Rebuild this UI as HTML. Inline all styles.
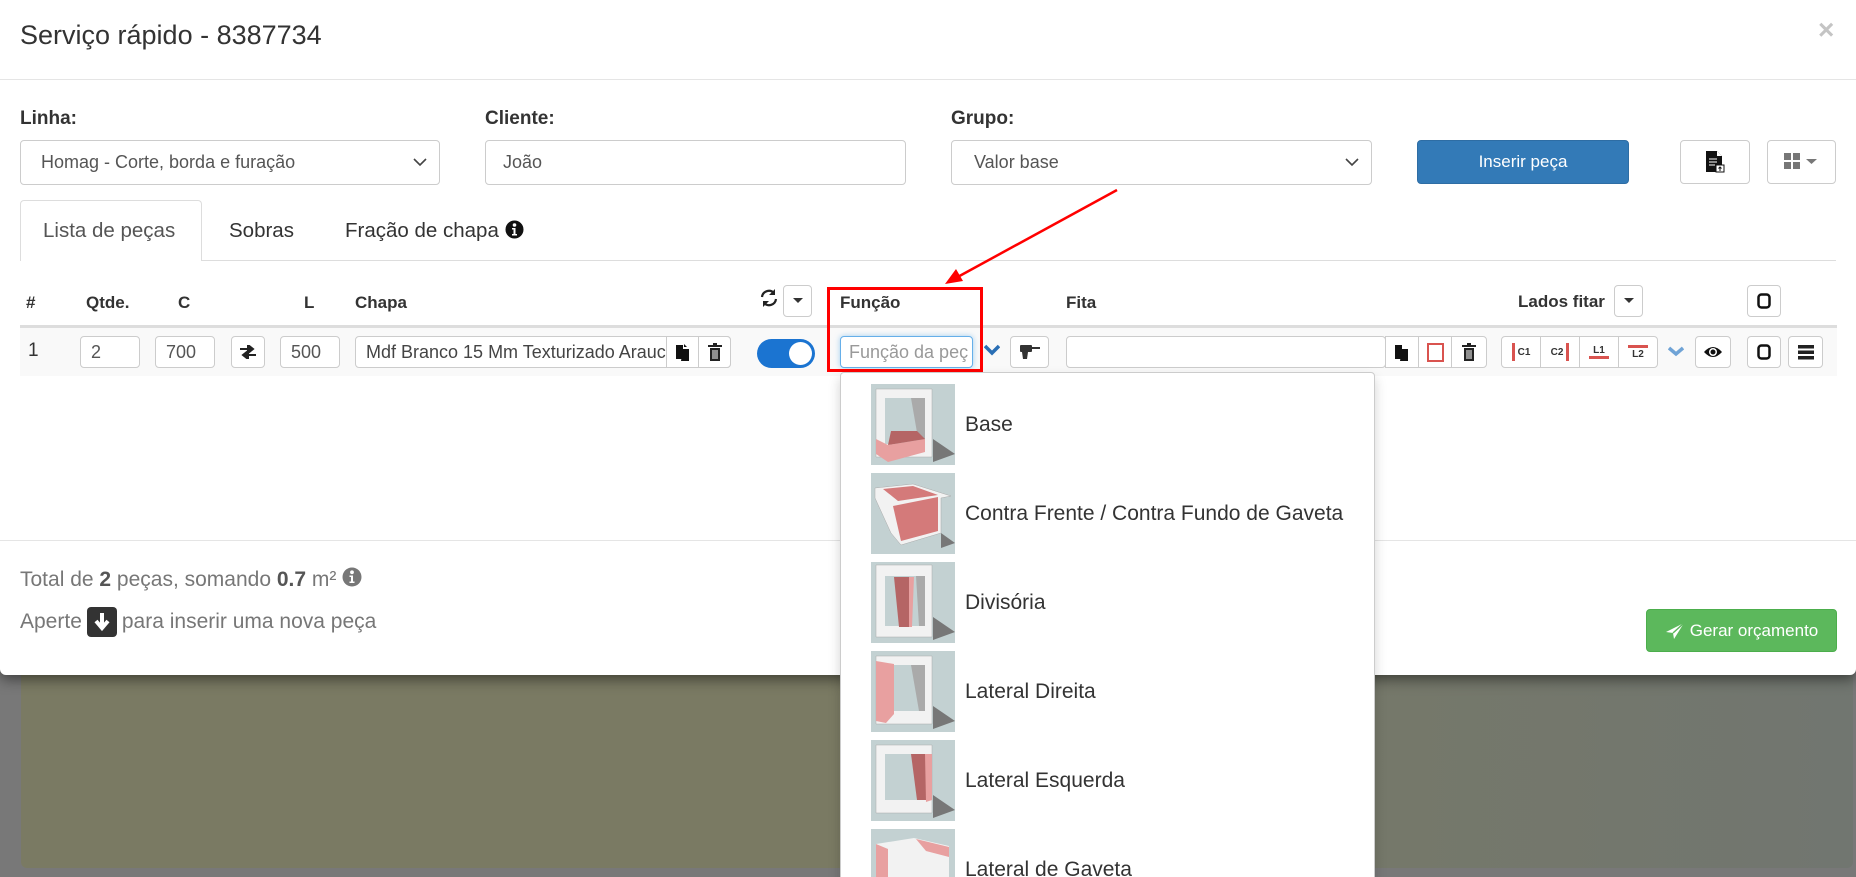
<!DOCTYPE html>
<html style="width:1856px;height:877px;overflow:hidden"><head><meta charset="utf-8">
<style>
*{box-sizing:border-box;margin:0;padding:0}
body{width:1856px;height:877px;overflow:hidden;background:#787878;font-family:"Liberation Sans",Arial,sans-serif;color:#333;position:relative}
.a{position:absolute}
.panel{left:21px;top:660px;width:1832px;height:208px;background:linear-gradient(90deg,#7a7a63 0%,#7a7a63 45%,#717670 100%);border-radius:0 0 6px 6px}
.modal{left:0;top:0;width:1856px;height:675px;background:#fff;border-radius:0 0 6px 6px;box-shadow:0 4px 14px rgba(0,0,0,.5)}
.inp{position:absolute;border:1px solid #ccc;border-radius:4px;background:#fff;font-size:18px;color:#555;padding-left:10px;display:flex;align-items:center;white-space:nowrap;overflow:hidden}
.btn{position:absolute;border:1px solid #ccc;border-radius:4px;background:#fff;display:flex;align-items:center;justify-content:center}
.lbl{position:absolute;font-weight:bold;font-size:19px;color:#333}
.th{position:absolute;font-weight:bold;font-size:17px;top:293px;color:#333}
.item{position:absolute;left:30px;height:81px;display:flex;align-items:center}
.item span{font-size:21px;color:#333;margin-left:10px}
.sm{font-size:10px;font-weight:bold;color:#333}
</style></head><body>
<div class="a panel"></div>
<div class="a modal">
  <div class="a" style="left:20px;top:20px;font-size:27px;color:#333">Serviço rápido - 8387734</div>
  <div class="a" style="left:1818px;top:14px;font-size:28px;font-weight:bold;color:#c4c4c4">×</div>
  <div class="a" style="left:0;top:79px;width:1856px;height:1px;background:#e5e5e5"></div>

  <div class="lbl" style="left:20px;top:108px">Linha:</div>
  <div class="lbl" style="left:485px;top:108px">Cliente:</div>
  <div class="lbl" style="left:951px;top:108px">Grupo:</div>
  <div class="inp" style="left:20px;top:140px;width:420px;height:45px;padding-left:20px">Homag - Corte, borda e furação
    <svg class="a" style="right:12px;top:17px" width="14" height="9"><path d="M1 1l6 6 6-6" stroke="#444" stroke-width="1.6" fill="none"/></svg></div>
  <div class="inp" style="left:485px;top:140px;width:421px;height:45px;padding-left:17px">João</div>
  <div class="inp" style="left:951px;top:140px;width:421px;height:45px;padding-left:22px">Valor base
    <svg class="a" style="right:12px;top:17px" width="14" height="9"><path d="M1 1l6 6 6-6" stroke="#444" stroke-width="1.6" fill="none"/></svg></div>
  <div class="btn" style="left:1417px;top:140px;width:212px;height:44px;background:#337ab7;border-color:#2e6da4;color:#fff;font-size:17px">Inserir peça</div>
  <div class="btn" style="left:1680px;top:140px;width:70px;height:44px">
    <svg width="22" height="24"><path d="M2 1h11l5 5v16H2z" fill="#111"/><path d="M13 1v5h5" fill="#fff"/><path d="M5 9h8M5 12h8M5 15h6" stroke="#fff" stroke-width="1"/><rect x="12" y="15" width="8" height="7" fill="#fff" stroke="#111"/><path d="M16 21v-4M14.5 18.5l1.5-1.5 1.5 1.5" stroke="#111" fill="none"/></svg></div>
  <div class="btn" style="left:1767px;top:140px;width:69px;height:44px">
    <svg width="36" height="18"><rect x="0" y="0" width="7" height="7" fill="#777"/><rect x="9" y="0" width="7" height="7" fill="#777"/><rect x="0" y="9" width="7" height="7" fill="#777"/><rect x="9" y="9" width="7" height="7" fill="#777"/><path d="M22 6h11l-5.5 5z" fill="#777"/></svg></div>

  <div class="a" style="left:20px;top:200px;width:182px;height:61px;border:1px solid #ddd;border-bottom:none;border-radius:4px 4px 0 0;background:#fff;z-index:2"></div>
  <div class="a" style="left:20px;top:260px;width:1816px;height:1px;background:#ddd"></div>
  <div class="a" style="left:43px;top:219px;font-size:20.5px;color:#555;z-index:3">Lista de peças</div>
  <div class="a" style="left:229px;top:219px;font-size:20.5px;color:#333">Sobras</div>
  <div class="a" style="left:345px;top:219px;font-size:20.5px;color:#333">Fração de chapa <svg width="19" height="19" style="vertical-align:-2px"><circle cx="9.5" cy="9.5" r="9" fill="#111"/><circle cx="9.5" cy="5" r="1.8" fill="#fff"/><path d="M7 8h3.5v6H12v1.5H7V14h1.5v-4.5H7z" fill="#fff"/></svg></div>

  <div class="th" style="left:26px">#</div>
  <div class="th" style="left:86px">Qtde.</div>
  <div class="th" style="left:178px">C</div>
  <div class="th" style="left:304px">L</div>
  <div class="th" style="left:355px">Chapa</div>
  <svg class="a" style="left:759px;top:288px" width="20" height="20"><path d="M3 9a7 7 0 0 1 12-4M17 11a7 7 0 0 1-12 4" stroke="#222" stroke-width="2.2" fill="none"/><path d="M16 1v6h-6zM4 19v-6h6z" fill="#222"/></svg>
  <div class="btn" style="left:783px;top:285px;width:29px;height:32px"><svg width="10" height="6"><path d="M0 0h10L5 5z" fill="#333"/></svg></div>
  <div class="th" style="left:840px">Função</div>
  <div class="th" style="left:1066px">Fita</div>
  <div class="th" style="left:1518px;font-size:17px;top:292px">Lados fitar</div>
  <div class="btn" style="left:1614px;top:285px;width:29px;height:32px"><svg width="10" height="6"><path d="M0 0h10L5 5z" fill="#333"/></svg></div>
  <div class="btn" style="left:1747px;top:285px;width:34px;height:32px"><svg width="14" height="16"><rect x="1.5" y="1.5" width="11" height="13" rx="3" stroke="#111" stroke-width="2.5" fill="none"/></svg></div>

  <div class="a" style="left:20px;top:325px;width:1817px;height:3px;background:#ddd"></div>
  <div class="a" style="left:20px;top:328px;width:1817px;height:48px;background:#f9f9f9"></div>
  <div class="a" style="left:28px;top:340px;font-size:19px;color:#333">1</div>
  <div class="inp" style="left:80px;top:336px;width:60px;height:32px">2</div>
  <div class="inp" style="left:155px;top:336px;width:60px;height:32px">700</div>
  <div class="btn" style="left:231px;top:336px;width:34px;height:32px"><svg width="18" height="14"><path d="M1 4h12M9 0l5 4-5 4z M17 10H5M9 6l-5 4 5 4z" stroke="#222" stroke-width="2" fill="#222"/></svg></div>
  <div class="inp" style="left:280px;top:336px;width:60px;height:32px">500</div>
  <div class="inp" style="left:355px;top:336px;width:376px;height:32px;color:#444">Mdf Branco 15 Mm Texturizado Arauc</div>
  <div class="btn" style="left:666px;top:336px;width:33px;height:32px;border-radius:0"><svg width="16" height="18"><path d="M1 2h7v14H1z M8 6h6v12H6z" fill="#111"/><path d="M9 1l3 3h-3z" fill="#111"/></svg></div>
  <div class="btn" style="left:698px;top:336px;width:33px;height:32px;border-radius:0 4px 4px 0"><svg width="14" height="18"><path d="M0 3h14M5 1h4" stroke="#222" stroke-width="2"/><rect x="2" y="5" width="10" height="13" fill="#222"/><path d="M5 7v9M7 7v9M9 7v9" stroke="#fff"/></svg></div>
  <div class="a" style="left:757px;top:339px;width:58px;height:29px;border-radius:15px;background:#1b74d1"><div class="a" style="right:3px;top:3px;width:23px;height:23px;border-radius:50%;background:#fff"></div></div>
  <div class="inp" style="left:840px;top:336px;width:133px;height:32px;border-color:#66afe9;box-shadow:0 0 6px rgba(102,175,233,.6);color:#999;font-size:18px;padding-left:8px">Função da peç</div>
  <svg class="a" style="left:984px;top:344px" width="16" height="12"><path d="M1 2l7 7 7-7" stroke="#2a6fb5" stroke-width="3.5" fill="none"/></svg>
  <div class="btn" style="left:1010px;top:336px;width:39px;height:32px"><svg width="22" height="16"><rect x="1" y="1" width="12" height="7" rx="1" fill="#333"/><path d="M3 8h6l-1 7H4z" fill="#333"/><path d="M13 4h8" stroke="#333" stroke-width="2"/></svg></div>
  <div class="a" style="left:827px;top:287px;width:156px;height:85px;border:3px solid #f00"></div>
  <svg class="a" style="left:940px;top:185px" width="185" height="105"><path d="M177 5L14 94" stroke="#f00" stroke-width="2.5"/><path d="M5 99l18-3-7-12z" fill="#f00"/></svg>

  <div class="inp" style="left:1066px;top:336px;width:320px;height:32px"></div>
  <div class="btn" style="left:1385px;top:336px;width:34px;height:32px;border-radius:0"><svg width="16" height="18"><path d="M1 2h7v14H1z M8 6h6v12H6z" fill="#111"/></svg></div>
  <div class="btn" style="left:1418px;top:336px;width:34px;height:32px;border-radius:0"><div style="width:17px;height:19px;border:2.5px solid #d9534f"></div></div>
  <div class="btn" style="left:1451px;top:336px;width:36px;height:32px;border-radius:0 4px 4px 0"><svg width="14" height="18"><path d="M0 3h14M5 1h4" stroke="#222" stroke-width="2"/><rect x="2" y="5" width="10" height="13" fill="#222"/><path d="M5 7v9M7 7v9M9 7v9" stroke="#fff"/></svg></div>

  <div class="btn" style="left:1501px;top:336px;width:40px;height:32px;border-radius:4px 0 0 4px"><span style="display:inline-block;width:3px;height:18px;background:#d9534f;margin-right:3px"></span><span class="sm">C1</span></div>
  <div class="btn" style="left:1540px;top:336px;width:40px;height:32px;border-radius:0"><span class="sm">C2</span><span style="display:inline-block;width:3px;height:18px;background:#d9534f;margin-left:3px"></span></div>
  <div class="btn" style="left:1579px;top:336px;width:40px;height:32px;border-radius:0"><span class="sm" style="border-bottom:3px solid #d9534f;padding:0 4px">L1</span></div>
  <div class="btn" style="left:1618px;top:336px;width:40px;height:32px;border-radius:0 4px 4px 0"><span class="sm" style="border-top:3px solid #d9534f;padding:1px 4px 0">L2</span></div>
  <svg class="a" style="left:1668px;top:346px" width="16" height="11"><path d="M1 2l7 6 7-6" stroke="#6fa3d6" stroke-width="3.5" fill="none"/></svg>
  <div class="btn" style="left:1695px;top:336px;width:36px;height:32px"><svg width="20" height="14"><path d="M1 7Q10-3 19 7Q10 17 1 7z" fill="#111"/><circle cx="10" cy="7" r="4" fill="#fff"/><circle cx="10" cy="7" r="2.5" fill="#111"/></svg></div>
  <div class="btn" style="left:1747px;top:336px;width:34px;height:32px"><svg width="14" height="16"><rect x="1.5" y="1.5" width="11" height="13" rx="3" stroke="#111" stroke-width="2.5" fill="none"/></svg></div>
  <div class="btn" style="left:1788px;top:336px;width:35px;height:32px"><svg width="16" height="15"><rect y="0" width="16" height="3.5" fill="#222"/><rect y="5.5" width="16" height="3.5" fill="#222"/><rect y="11" width="16" height="3.5" fill="#222"/></svg></div>

  <div class="a" style="left:0;top:540px;width:1856px;height:1px;background:#e5e5e5"></div>
  <div class="a" style="left:20px;top:567px;font-size:21px;color:#777">Total de <b style="color:#555">2</b> peças, somando <b style="color:#555">0.7</b> m² <svg width="20" height="20" style="vertical-align:-1px"><circle cx="10" cy="10" r="9.5" fill="#777"/><circle cx="10" cy="5.3" r="1.9" fill="#fff"/><path d="M7.5 8.5h3.5v6h1.5v1.5h-5V14.5h1.5v-4.5H7.5z" fill="#fff"/></svg></div>
  <div class="a" style="left:20px;top:607px;font-size:21px;color:#777;display:flex;align-items:center">Aperte <span style="display:inline-flex;width:30px;height:30px;background:#333;border-radius:4px;margin:0 5px;align-items:center;justify-content:center"><svg width="16" height="20"><path d="M8 1v12M2 9l6 7 6-7" stroke="#fff" stroke-width="4" fill="none"/></svg></span> para inserir uma nova peça</div>
  <div class="btn" style="left:1646px;top:609px;width:191px;height:43px;background:#5cb85c;border-color:#4cae4c;color:#fff;font-size:17px"><svg width="20" height="18" style="margin-right:5px"><path d="M19 1L1 10l7 1 1 6z" fill="#fff"/><path d="M19 1L8 11" stroke="#5cb85c" stroke-width="1.5"/></svg>Gerar orçamento</div>
</div>

<div class="a" style="left:840px;top:372px;width:535px;height:540px;background:#fff;border:1px solid #ccc;border-radius:4px;box-shadow:0 6px 12px rgba(0,0,0,.18)">
  <div class="item" style="top:11px"><svg width="84" height="81"><rect width="84" height="81" fill="#c3d1d2"/><path d="M62 55L84 70 62 78z" fill="#777"/><path d="M5 5h56v68H5z" fill="#f2f2f2" stroke="#aaa" stroke-width=".5"/><path d="M14 14h40v46H14z" fill="#c3d1d2"/><path d="M40 14h14v46H48z" fill="#aaa"/><path d="M5 55l12 6 37-6v13L17 78 5 70z" fill="#e8a0a0"/><path d="M17 61l37-6-8-8H20z" fill="#b56565"/></svg><span>Base</span></div>
  <div class="item" style="top:100px"><svg width="84" height="81"><rect width="84" height="81" fill="#c3d1d2"/><path d="M70 60L84 70 70 75z" fill="#777"/><path d="M4 15l38-4 38 12L70 25 70 60 30 72 20 60 4 25z" fill="#f2f2f2" stroke="#aaa" stroke-width=".5"/><path d="M12 16l30-3 25 9-40 6z" fill="#d47a7a"/><path d="M22 33l45-9v34L30 68z" fill="#d47a7a"/></svg><span>Contra Frente / Contra Fundo de Gaveta</span></div>
  <div class="item" style="top:189px"><svg width="84" height="81"><rect width="84" height="81" fill="#c3d1d2"/><path d="M62 55L84 70 62 78z" fill="#777"/><path d="M5 3h56v72H5z" fill="#f2f2f2" stroke="#aaa" stroke-width=".5"/><path d="M14 14h40v50H14z" fill="#c3d1d2"/><path d="M45 14h9v50H48z" fill="#aaa"/><path d="M23 15h15v50H28z" fill="#b56565"/><path d="M38 15h5l-2 50h-3z" fill="#e8a0a0"/></svg><span>Divisória</span></div>
  <div class="item" style="top:278px"><svg width="84" height="81"><rect width="84" height="81" fill="#c3d1d2"/><path d="M62 55L84 70 62 78z" fill="#777"/><path d="M5 5h56v68H5z" fill="#f2f2f2" stroke="#aaa" stroke-width=".5"/><path d="M22 14h32v46H22z" fill="#c3d1d2"/><path d="M40 14h14v46H48z" fill="#aaa"/><path d="M5 10l18 3v50L15 72 5 70z" fill="#e8a0a0"/></svg><span>Lateral Direita</span></div>
  <div class="item" style="top:367px"><svg width="84" height="81"><rect width="84" height="81" fill="#c3d1d2"/><path d="M62 55L84 70 62 78z" fill="#777"/><path d="M5 5h56v68H5z" fill="#f2f2f2" stroke="#aaa" stroke-width=".5"/><path d="M14 14h40v46H14z" fill="#c3d1d2"/><path d="M40 14h20v46H46z" fill="#b56565"/><path d="M54 14h7v46l-6 2z" fill="#e8a0a0"/></svg><span>Lateral Esquerda</span></div>
  <div class="item" style="top:456px"><svg width="84" height="81"><rect width="84" height="81" fill="#c3d1d2"/><path d="M5 15l38-6 35 8v45L28 75 5 65z" fill="#f2f2f2"/><path d="M5 15l12 5v55L5 65z" fill="#e8a0a0"/><path d="M45 10l33 8v10L55 22z" fill="#e8a0a0"/></svg><span>Lateral de Gaveta</span></div>
</div>
</body></html>
